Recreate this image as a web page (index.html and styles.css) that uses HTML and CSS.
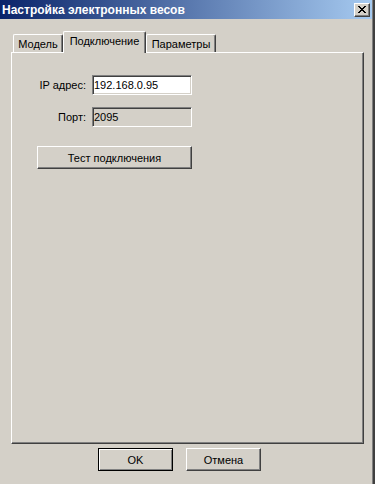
FILE: index.html
```html
<!DOCTYPE html>
<html lang="ru">
<head>
  <meta charset="UTF-8">
  <title>Настройка электронных весов</title>
  <link rel="stylesheet" href="styles.css">
</head>
<body>
<div class="window">

  <div class="titlebar">
    <span class="title">Настройка электронных весов</span>
    <div class="close-btn">
      <svg width="14" height="12" viewBox="0 0 14 12">
        <path fill="#000" d="M3 2h2v1h-2z M9 2h2v1h-2z M4 3h2v1h-2z M8 3h2v1h-2z M5 4h4v1h-4z M6 5h2v1h-2z M5 6h4v1h-4z M4 7h2v1h-2z M8 7h2v1h-2z M3 8h2v1h-2z M9 8h2v1h-2z"/>
      </svg>
    </div>
  </div>

  <div class="dialog-body">

    <div class="tabs">
      <div class="tab tab-model">Модель</div>
      <div class="tab tab-connection active">Подключение</div>
      <div class="tab tab-params">Параметры</div>
    </div>

    <div class="tab-panel">
      <div class="form">
        <label class="field-label" for="ip">IP адрес:</label>
        <input class="field" id="ip" type="text" value="192.168.0.95">

        <label class="field-label" for="port">Порт:</label>
        <input class="field readonly" id="port" type="text" value="2095" readonly>

        <button type="button" class="btn test-btn">Тест подключения</button>
      </div>
    </div>

    <div class="dialog-buttons">
      <button type="button" class="btn default">OK</button>
      <button type="button" class="btn">Отмена</button>
    </div>

  </div>

</div>
</body>
</html>
```

FILE: styles.css
```css
body {
  margin: 0;
  background-color: #D4D0C8;
  font-family: "Liberation Sans", Arial, sans-serif;
  font-size: 11px;
  color: #000;
}

.window {
  width: 375px;
  height: 484px;
  box-sizing: border-box;
  display: flex;
  flex-direction: column;
  border-right: 2px solid #404040;
  box-shadow: inset -1px 0 #808080;
}

.titlebar {
  height: 19px;
  margin-right: 1px;
  display: flex;
  justify-content: space-between;
  align-items: center;
  padding: 0 2px 0 2px;
  background: linear-gradient(to right, #0A246A, #A6CAF0);
}

.title {
  color: white;
  font-weight: bold;
  font-size: 12px;
}

.close-btn {
  width: 16px;
  height: 14px;
  box-sizing: border-box;
  display: flex;
  background-color: #D4D0C8;
  border: 1px solid;
  border-color: #fff #404040 #404040 #fff;
  box-shadow: inset -1px -1px #808080;
}

.dialog-body {
  flex: 1;
  display: flex;
  flex-direction: column;
  padding: 12px 9px 13px 11px;
}

.tabs {
  height: 21px;
  display: flex;
  align-items: flex-end;
  padding-left: 2px;
}

.tab {
  height: 18px;
  box-sizing: border-box;
  padding-top: 3px;
  line-height: 13px;
  white-space: nowrap;
  background-color: #D4D0C8;
  border-top: 1px solid #fff;
  border-left: 1px solid #fff;
  border-right: 1px solid #404040;
  border-top-left-radius: 2px;
  border-top-right-radius: 2px;
  box-shadow: inset -1px 0 #808080;
  text-align: center;
}

.tab-model {
  width: 50px;
}

.tab-connection {
  width: 83px;
}

.tab-params {
  width: 70px;
}

.tab.active {
  height: 22px;
  margin-bottom: -1px;
  position: relative;
  z-index: 1;
}

.tab-panel {
  flex: 1;
  border: 1px solid;
  border-color: #fff #404040 #404040 #fff;
  box-shadow: inset -1px -1px #808080;
  padding: 22px 0 0 25px;
}

.form {
  display: grid;
  grid-template-columns: 49px 100px;
  column-gap: 6px;
  row-gap: 12px;
  align-items: center;
  width: max-content;
}

.field-label {
  text-align: right;
  white-space: nowrap;
}

.field {
  width: 100px;
  height: 20px;
  box-sizing: border-box;
  margin: 0;
  padding: 0 1px;
  font-family: inherit;
  font-size: 11px;
  color: #000;
  background-color: #fff;
  border: 1px solid;
  border-color: #808080 #fff #fff #808080;
  box-shadow: inset 1px 1px #404040, inset -1px -1px #D4D0C8;
  outline: none;
}

.field.readonly {
  background-color: #D4D0C8;
}

.btn {
  height: 23px;
  box-sizing: border-box;
  margin: 0;
  padding: 0;
  font-family: inherit;
  font-size: 11px;
  color: #000;
  background-color: #D4D0C8;
  border: 1px solid;
  border-color: #fff #404040 #404040 #fff;
  box-shadow: inset -1px -1px #808080;
  border-radius: 0;
}

.test-btn {
  grid-column: 1 / -1;
  margin-top: 7px;
}

.dialog-buttons {
  display: flex;
  gap: 13px;
  margin-top: 4px;
  padding-left: 87px;
}

.dialog-buttons .btn {
  width: 75px;
}

.btn.default {
  border-color: #000;
  box-shadow: inset 1px 1px #fff, inset -1px -1px #808080;
}
```
